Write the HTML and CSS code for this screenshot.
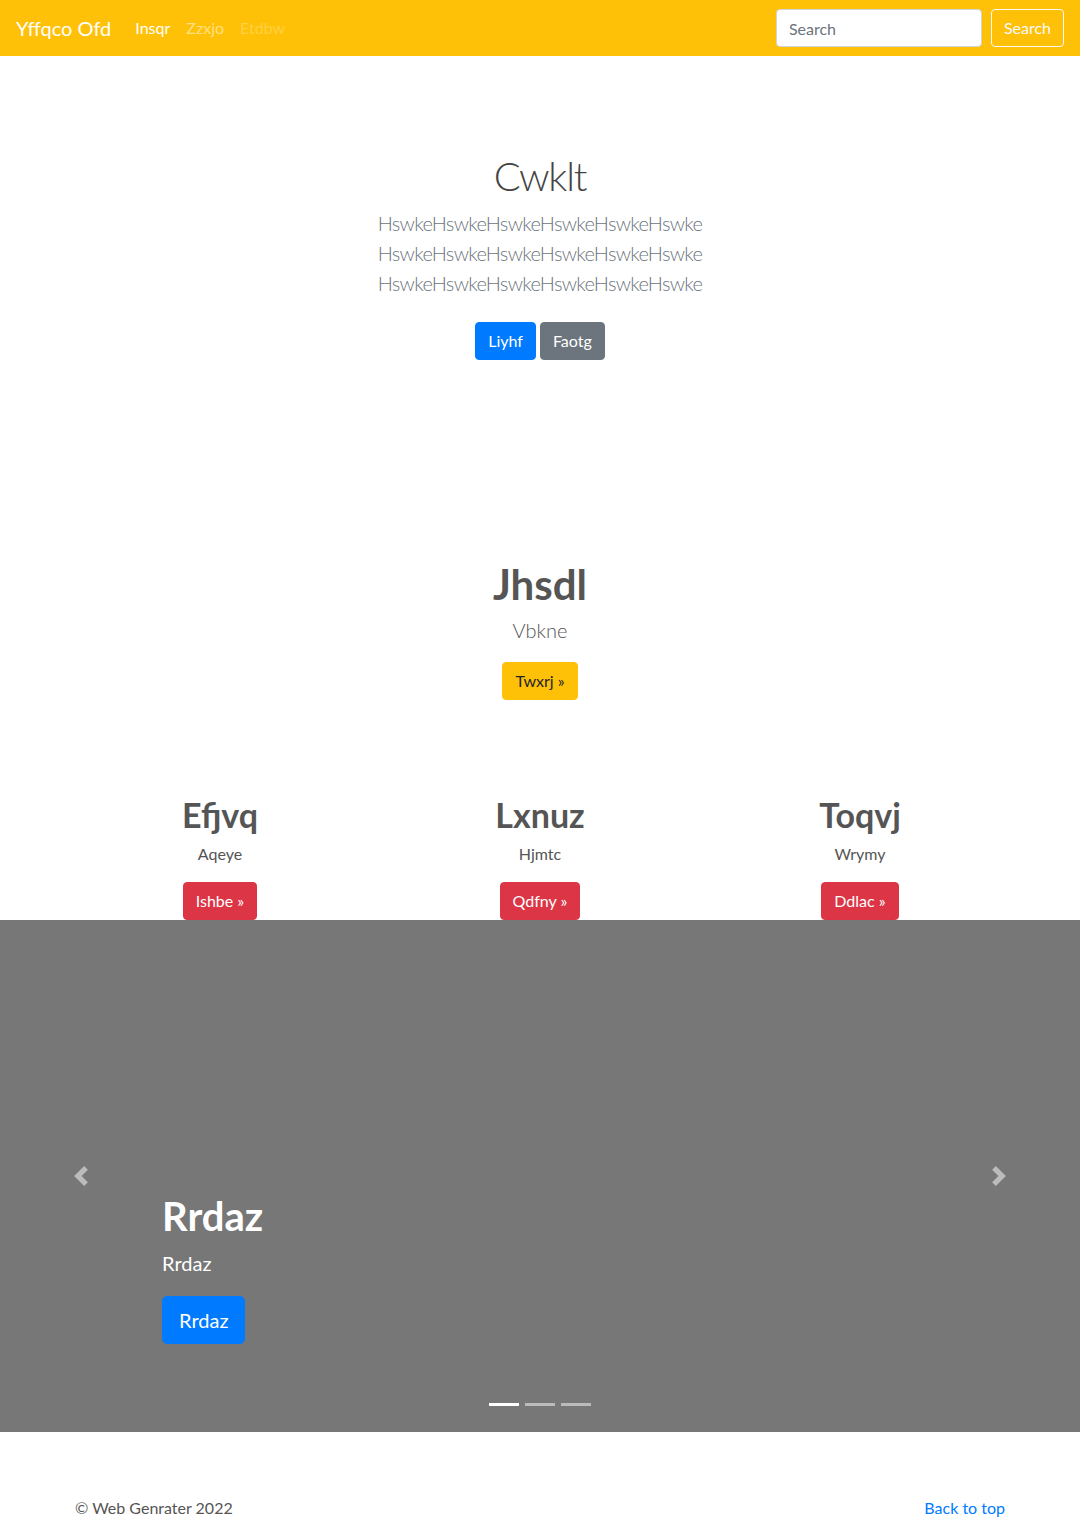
FILE: index.html
```html
<!DOCTYPE html>
<html lang="en">
<head>
<meta charset="utf-8">
<title>Yffqco Ofd</title>
<link rel="stylesheet" href="styles.css">
</head>
<body>
<header class="navbar">
  <a class="brand" href="#">Yffqco Ofd</a>
  <nav class="nav">
    <a class="nav-link active" href="#">Insqr</a>
    <a class="nav-link" href="#">Zzxjo</a>
    <a class="nav-link disabled" href="#">Etdbw</a>
  </nav>
  <form class="search">
    <input class="search-input" type="text" placeholder="Search">
    <button class="btn btn-outline-light" type="button">Search</button>
  </form>
</header>

<main>
  <section class="hero">
    <h1 class="hero-title">Cwklt</h1>
    <p class="lead muted hero-lead">HswkeHswkeHswkeHswkeHswkeHswke HswkeHswkeHswkeHswkeHswkeHswke HswkeHswkeHswkeHswkeHswkeHswke</p>
    <p class="hero-actions">
      <a class="btn btn-primary" href="#">Liyhf</a>
      <a class="btn btn-secondary" href="#">Faotg</a>
    </p>
  </section>

  <section class="feature">
    <h1 class="feature-title">Jhsdl</h1>
    <p class="lead feature-lead">Vbkne</p>
    <p class="feature-action"><a class="btn btn-warning" href="#">Twxrj &raquo;</a></p>
  </section>

  <section class="columns">
    <div class="col">
      <h2 class="col-title">Efjvq</h2>
      <p class="col-text">Aqeye</p>
      <p class="col-action"><a class="btn btn-danger" href="#">Ishbe &raquo;</a></p>
    </div>
    <div class="col">
      <h2 class="col-title">Lxnuz</h2>
      <p class="col-text">Hjmtc</p>
      <p class="col-action"><a class="btn btn-danger" href="#">Qdfny &raquo;</a></p>
    </div>
    <div class="col">
      <h2 class="col-title">Toqvj</h2>
      <p class="col-text">Wrymy</p>
      <p class="col-action"><a class="btn btn-danger" href="#">Ddlac &raquo;</a></p>
    </div>
  </section>

  <section class="carousel">
    <div class="carousel-item">
      <div class="carousel-caption">
        <h1 class="caption-title">Rrdaz</h1>
        <p class="caption-text">Rrdaz</p>
        <p class="caption-action"><a class="btn btn-primary btn-lg" href="#">Rrdaz</a></p>
      </div>
    </div>
    <a class="carousel-control prev" href="#" aria-label="Previous">
      <svg class="control-icon" viewBox="0 0 8 8" width="20" height="20"><path d="M5.25 0l-4 4 4 4 1.5-1.5L4.25 4l2.5-2.5L5.25 0z"/></svg>
    </a>
    <a class="carousel-control next" href="#" aria-label="Next">
      <svg class="control-icon" viewBox="0 0 8 8" width="20" height="20"><path d="M2.75 0l-1.5 1.5L3.75 4l-2.5 2.5L2.75 8l4-4-4-4z"/></svg>
    </a>
    <ol class="indicators">
      <li class="indicator active"></li>
      <li class="indicator"></li>
      <li class="indicator"></li>
    </ol>
  </section>
</main>

<footer class="footer">
  <p class="footer-copy">&copy; Web Genrater 2022</p>
  <p class="footer-top"><a href="#">Back to top</a></p>
</footer>
</body>
</html>
```

FILE: styles.css
```css
* { box-sizing: border-box; }

html, body {
  margin: 0;
  padding: 0;
}

body {
  font-family: "Lato", "Open Sans", "Noto Sans", sans-serif;
  font-size: 16px;
  line-height: 1.5;
  color: #555;
  background: #fff;
}

a { text-decoration: none; }

p, h1, h2 { margin: 0; }

/* Navbar */
.navbar {
  height: 56px;
  background: #ffc107;
  display: flex;
  align-items: center;
  padding: 8px 16px;
}

.brand {
  color: #fff;
  font-size: 20px;
  line-height: 30px;
  padding: 5px 0;
  margin-right: 16px;
}

.nav {
  display: flex;
  flex: 1;
}

.nav-link {
  color: rgba(255, 255, 255, 0.5);
  padding: 8px;
  line-height: 24px;
}

.nav-link.active { color: #fff; }
.nav-link.disabled { color: rgba(255, 255, 255, 0.25); }

.search {
  display: flex;
  align-items: center;
}

.search-input {
  width: 206px;
  height: 38px;
  padding: 6px 12px;
  font-family: inherit;
  font-size: 16px;
  color: #495057;
  background: #fff;
  border: 1px solid #ced4da;
  border-radius: 4px;
  margin-right: 9px;
}

.search-input::placeholder { color: #6c757d; }

/* Buttons */
.btn {
  display: inline-block;
  font-family: inherit;
  font-size: 16px;
  line-height: 24px;
  padding: 6px 12px;
  border: 1px solid transparent;
  border-radius: 4px;
  color: #fff;
  cursor: pointer;
}

.btn-outline-light {
  background: transparent;
  border-color: #f8f9fa;
  color: #f8f9fa;
}

.btn-primary { background: #007bff; border-color: #007bff; }
.btn-secondary { background: #6c757d; border-color: #6c757d; }
.btn-warning { background: #ffc107; border-color: #ffc107; color: #212529; }
.btn-danger { background: #dc3545; border-color: #dc3545; }

.btn-lg {
  font-size: 20px;
  line-height: 30px;
  padding: 8px 16px;
  border-radius: 5px;
}

/* Hero */
.hero {
  text-align: center;
  padding: 96px 0 96px;
}

.hero-title {
  font-size: 40px;
  font-weight: 300;
  line-height: 1.2;
  margin-bottom: 8px;
  color: #444;
  letter-spacing: -1.2px;
}

.lead {
  font-size: 20px;
  font-weight: 300;
  line-height: 30px;
}

.muted { color: #6c757d; }

.hero-lead {
  max-width: 450px;
  margin: 0 auto 16px;
  letter-spacing: -0.7px;
}

.hero-actions {
  display: flex;
  justify-content: center;
  gap: 4px;
  padding: 8px 0;
}

/* Feature */
.feature {
  text-align: center;
  padding-top: 95px;
}

.feature-title {
  font-size: 42px;
  font-weight: 700;
  line-height: 1.2;
  margin-bottom: 6px;
}

.feature-lead {
  margin-bottom: 17px;
}

.feature-action {
  display: flex;
  justify-content: center;
}

/* Columns */
.columns {
  width: 960px;
  margin: 95px auto 0;
  display: grid;
  grid-template-columns: repeat(3, 1fr);
  text-align: center;
}

.col {
  padding: 0 15px;
}

.col-title {
  font-size: 34px;
  font-weight: 700;
  line-height: 1.2;
  margin-bottom: 6px;
}

.col-text {
  margin-bottom: 16px;
}

.col-action {
  display: flex;
  justify-content: center;
}

/* Carousel */
.carousel {
  position: relative;
  height: 512px;
  background: #777;
  margin-bottom: 64px;
}

.carousel-item {
  height: 100%;
}

.carousel-caption {
  position: absolute;
  left: 15%;
  right: 15%;
  bottom: 48px;
  padding: 20px 0;
  color: #fff;
  text-align: left;
}

.caption-title {
  font-size: 40px;
  font-weight: 700;
  line-height: 1.2;
  margin-bottom: 8px;
}

.caption-text {
  font-size: 20px;
  line-height: 30px;
  margin-bottom: 18px;
}

.caption-action {
  display: flex;
  margin-bottom: 20px;
}

.carousel-control {
  position: absolute;
  top: 0;
  bottom: 0;
  width: 15%;
  display: flex;
  align-items: center;
  justify-content: center;
  opacity: 0.5;
}

.carousel-control.prev { left: 0; }
.carousel-control.next { right: 0; }

.control-icon { fill: #fff; display: block; }

.indicators {
  position: absolute;
  left: 0;
  right: 0;
  bottom: 0;
  margin: 0 15% 16px;
  padding: 0;
  list-style: none;
  display: flex;
  justify-content: center;
}

.indicator {
  box-sizing: content-box;
  width: 30px;
  height: 3px;
  margin: 0 3px;
  background: #fff;
  background-clip: padding-box;
  border-top: 10px solid transparent;
  border-bottom: 10px solid transparent;
  opacity: 0.5;
}

.indicator.active { opacity: 1; }

/* Footer */
.footer {
  width: 960px;
  margin: 0 auto;
  padding: 0 15px;
  display: flex;
  justify-content: space-between;
}

.footer p { margin-bottom: 16px; }

.footer-top a { color: #007bff; }
```
